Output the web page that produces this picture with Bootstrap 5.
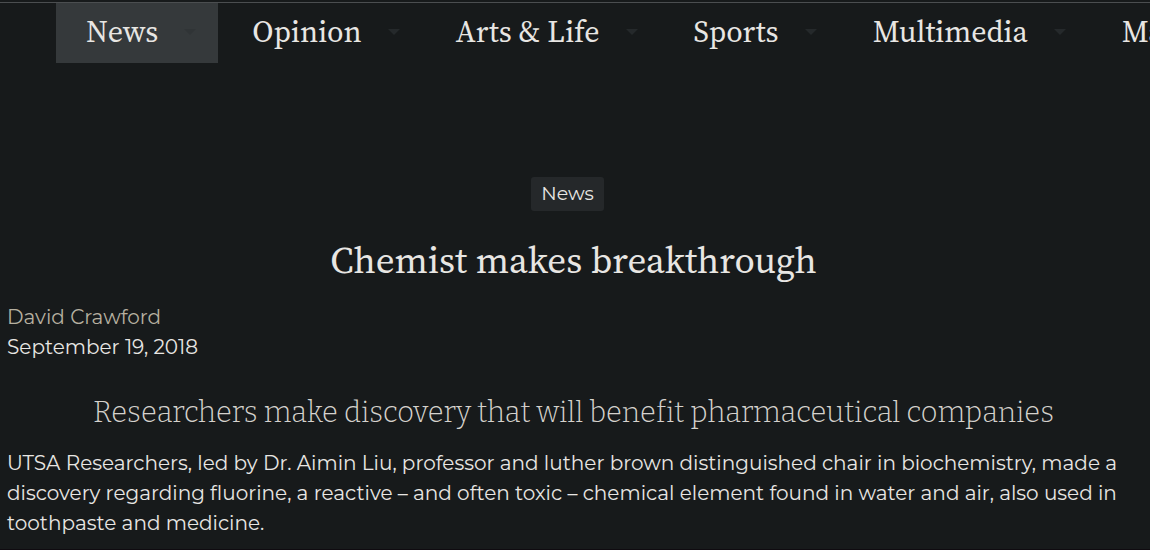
<!DOCTYPE html>
<html lang="en">
<head>
<meta charset="utf-8">
<meta name="viewport" content="width=device-width, initial-scale=1">
<title>Chemist makes breakthrough</title>
<link href="https://cdn.jsdelivr.net/npm/bootstrap@5.3.0/dist/css/bootstrap.min.css" rel="stylesheet">
<style>
body { background: #171a1b; color: #e8e6e3; font: 400 20px/30px Montserrat, Inter, sans-serif; }
.page { border-bottom: 1px solid #0f0b10; }
.site-nav { border-top: 1px solid #4b4e50; margin-top: 2px; padding-left: 56px; gap: 4px; font: 450 30px/58px "Source Serif 4", "Noto Serif", serif; }
.site-nav .nav-link { color: inherit; padding: 0 22px 2px 30px; gap: 26px; white-space: nowrap; }
.site-nav .nav-link.active { background: #35393b; }
.caret { width: 12px; height: 6px; fill: #25292b; }
.active .caret { fill: #303436; }
.story { padding: 114px 10px 10px 7px; }
.category { background: #25282a; color: inherit; font-size: 19px; line-height: 24px; padding: 5px 10px; border-radius: 3px; margin-right: 12px; }
.headline { font: 450 37px/44px "Source Serif 4", "Noto Serif", serif; margin: 27px 0 20px; }
.author { color: #b6b0a0; }
.deck { color: #d5d2cd; font: 300 29px/36px Bitter, "Noto Serif", serif; margin: 33px 0 17px; }
</style>
</head>
<body>
<div class="page min-vh-100 overflow-hidden">
  <nav aria-label="Sections">
    <ul class="site-nav nav flex-nowrap mb-0">
      <li><a class="nav-link active d-flex align-items-center" href="#">News<svg class="caret" viewBox="0 0 12 6" aria-hidden="true"><path d="M0 0h12L6 6z"/></svg></a></li>
      <li><a class="nav-link d-flex align-items-center" href="#">Opinion<svg class="caret" viewBox="0 0 12 6" aria-hidden="true"><path d="M0 0h12L6 6z"/></svg></a></li>
      <li><a class="nav-link d-flex align-items-center" href="#">Arts &amp; Life<svg class="caret" viewBox="0 0 12 6" aria-hidden="true"><path d="M0 0h12L6 6z"/></svg></a></li>
      <li><a class="nav-link d-flex align-items-center" href="#">Sports<svg class="caret" viewBox="0 0 12 6" aria-hidden="true"><path d="M0 0h12L6 6z"/></svg></a></li>
      <li><a class="nav-link d-flex align-items-center" href="#">Multimedia<svg class="caret" viewBox="0 0 12 6" aria-hidden="true"><path d="M0 0h12L6 6z"/></svg></a></li>
      <li><a class="nav-link d-flex align-items-center" href="#">Magazine</a></li>
    </ul>
  </nav>
  <main class="story">
    <div class="d-flex justify-content-center"><a class="category text-decoration-none" href="#">News</a></div>
    <h1 class="headline text-center">Chemist makes breakthrough</h1>
    <div><a class="author text-decoration-none" href="#">David Crawford</a></div>
    <div><time datetime="2018-09-19">September 19, 2018</time></div>
    <h2 class="deck text-center">Researchers make discovery that will benefit pharmaceutical companies</h2>
    <p class="mb-0">UTSA Researchers, led by Dr. Aimin Liu, professor and luther brown distinguished chair in biochemistry, made a discovery regarding fluorine, a reactive – and often toxic – chemical element found in water and air, also used in toothpaste and medicine.</p>
  </main>
</div>
<script src="https://cdn.jsdelivr.net/npm/bootstrap@5.3.0/dist/js/bootstrap.bundle.min.js"></script>
</body>
</html>
